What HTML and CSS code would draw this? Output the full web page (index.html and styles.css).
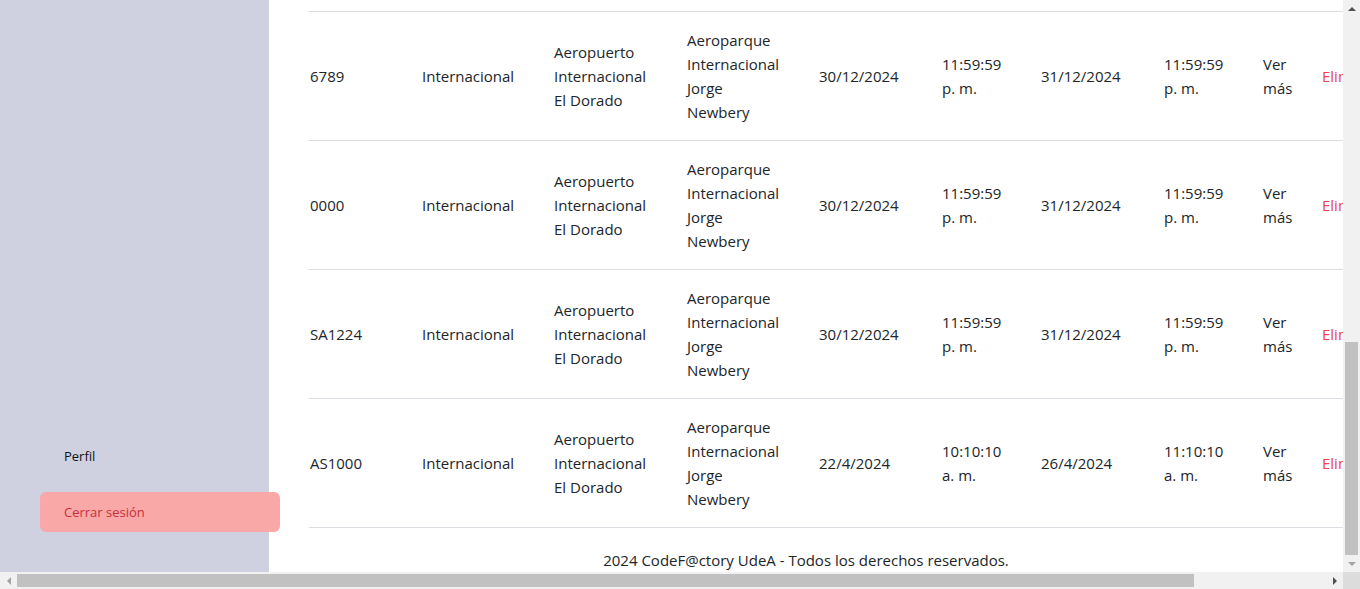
FILE: index.html
```html
<!DOCTYPE html>
<html lang="es">
<head>
<meta charset="utf-8">
<title>Vuelos</title>
<link rel="stylesheet" href="styles.css">
</head>
<body>
<div class="window">
  <div class="top-row">
    <div class="page">
      <aside class="sidebar">
        <a class="nav-item">Perfil</a>
        <a class="nav-item logout">Cerrar sesión</a>
      </aside>
      <main class="main">
        <div class="table-wrap">
          <table class="flights">
            <colgroup>
              <col class="c1"><col class="c2"><col class="c3"><col class="c4"><col class="c5">
              <col class="c6"><col class="c7"><col class="c8"><col class="c9"><col class="c10">
            </colgroup>
            <tbody>
              <tr>
                <td>6789</td><td>Internacional</td><td class="narrow">Aeropuerto Internacional El Dorado</td><td class="narrow">Aeroparque Internacional Jorge Newbery</td>
                <td>30/12/2024</td><td class="time">11:59:59 p. m.</td><td>31/12/2024</td><td class="time">11:59:59 p. m.</td><td class="more">Ver más</td><td class="del">Eliminar</td>
              </tr>
              <tr>
                <td>0000</td><td>Internacional</td><td class="narrow">Aeropuerto Internacional El Dorado</td><td class="narrow">Aeroparque Internacional Jorge Newbery</td>
                <td>30/12/2024</td><td class="time">11:59:59 p. m.</td><td>31/12/2024</td><td class="time">11:59:59 p. m.</td><td class="more">Ver más</td><td class="del">Eliminar</td>
              </tr>
              <tr>
                <td>SA1224</td><td>Internacional</td><td class="narrow">Aeropuerto Internacional El Dorado</td><td class="narrow">Aeroparque Internacional Jorge Newbery</td>
                <td>30/12/2024</td><td class="time">11:59:59 p. m.</td><td>31/12/2024</td><td class="time">11:59:59 p. m.</td><td class="more">Ver más</td><td class="del">Eliminar</td>
              </tr>
              <tr>
                <td>AS1000</td><td>Internacional</td><td class="narrow">Aeropuerto Internacional El Dorado</td><td class="narrow">Aeroparque Internacional Jorge Newbery</td>
                <td>22/4/2024</td><td class="time">10:10:10 a. m.</td><td>26/4/2024</td><td class="time">11:10:10 a. m.</td><td class="more">Ver más</td><td class="del">Eliminar</td>
              </tr>
            </tbody>
          </table>
        </div>
        <footer class="footer">2024 CodeF@ctory UdeA - Todos los derechos reservados.</footer>
      </main>
    </div>
    <div class="vscroll">
      <div class="sb-btn"><span class="arrow up"></span></div>
      <div class="vtrack"><div class="vthumb"></div></div>
      <div class="sb-btn"><span class="arrow down"></span></div>
    </div>
  </div>
  <div class="bottom-row">
    <div class="hscroll">
      <div class="sb-btn"><span class="arrow left"></span></div>
      <div class="htrack"><div class="hthumb"></div></div>
      <div class="sb-btn"><span class="arrow right"></span></div>
    </div>
    <div class="corner"></div>
  </div>
</div>
</body>
</html>
```

FILE: styles.css
```css
* { box-sizing: border-box; }
html, body { margin: 0; padding: 0; }
body {
  width: 1360px;
  height: 589px;
  overflow: hidden;
  background: #ffffff;
  font-family: "Open Sans", "Noto Sans", sans-serif;
  color: #212529;
}
.window {
  display: flex;
  flex-direction: column;
  height: 589px;
}
.top-row {
  display: flex;
  height: 572px;
}
.page {
  flex: 1;
  display: flex;
  overflow: hidden;
  min-width: 0;
}
.sidebar {
  width: 269px;
  flex: none;
  background: #cfd1e1;
  display: flex;
  flex-direction: column;
  justify-content: flex-end;
  gap: 16px;
  padding-bottom: 40px;
  position: relative;
  z-index: 1;
}
.nav-item {
  display: flex;
  align-items: center;
  margin-left: 40px;
  width: 240px;
  height: 40px;
  padding-left: 24px;
  font-size: 13px;
  color: #111111;
  border-radius: 6px;
}
.logout {
  background: #faa7a7;
  color: #c8303a;
}
.main {
  flex: 1;
  min-width: 0;
  overflow: hidden;
  display: flex;
  flex-direction: column;
}
.table-wrap {
  padding: 11px 0 0 40px;
}
.flights {
  border-collapse: collapse;
  table-layout: fixed;
  width: 1112px;
  font-size: 15px;
  line-height: 24px;
}
.c1 { width: 112px; }
.c2 { width: 132px; }
.c3 { width: 133px; }
.c4 { width: 132px; }
.c5 { width: 123px; }
.c6 { width: 99px; }
.c7 { width: 123px; }
.c8 { width: 99px; }
.c9 { width: 59px; }
.c10 { width: 100px; }
.flights tr {
  border-top: 1px solid #dcdce3;
  border-bottom: 1px solid #dcdce3;
}
.flights td {
  padding: 16px 8px 16px 1px;
  vertical-align: middle;
  text-align: left;
}
.flights td.narrow { padding-right: 36px; }
.flights td.time { padding-right: 30px; }
.flights td.more { padding-right: 16px; }
.flights td.del { color: #ea4650; }
.footer {
  margin-top: 20px;
  text-align: center;
  font-size: 15px;
  line-height: 24px;
}
.vscroll {
  width: 17px;
  flex: none;
  background: #f1f1f1;
  display: flex;
  flex-direction: column;
}
.sb-btn {
  width: 17px;
  height: 17px;
  flex: none;
  display: flex;
  align-items: center;
  justify-content: center;
}
.vtrack {
  flex: 1;
  display: flex;
  flex-direction: column;
  justify-content: flex-end;
}
.vthumb {
  height: 213px;
  margin: 0 2px;
  background: #c1c1c1;
}
.bottom-row {
  display: flex;
  height: 17px;
}
.hscroll {
  flex: 1;
  display: flex;
  background: #f1f1f1;
}
.htrack {
  flex: 1;
  display: flex;
  align-items: center;
}
.hthumb {
  width: 1177px;
  height: 13px;
  background: #c1c1c1;
}
.corner {
  width: 17px;
  background: #dcdcdc;
}
.arrow {
  width: 0;
  height: 0;
  border-style: solid;
}
.arrow.up { border-width: 0 4px 4px 4px; border-color: transparent transparent #505050 transparent; }
.arrow.down { border-width: 4px 4px 0 4px; border-color: #a3a3a3 transparent transparent transparent; }
.arrow.left { border-width: 4px 4px 4px 0; border-color: transparent #a3a3a3 transparent transparent; }
.arrow.right { border-width: 4px 0 4px 4px; border-color: transparent transparent transparent #505050; }
```
